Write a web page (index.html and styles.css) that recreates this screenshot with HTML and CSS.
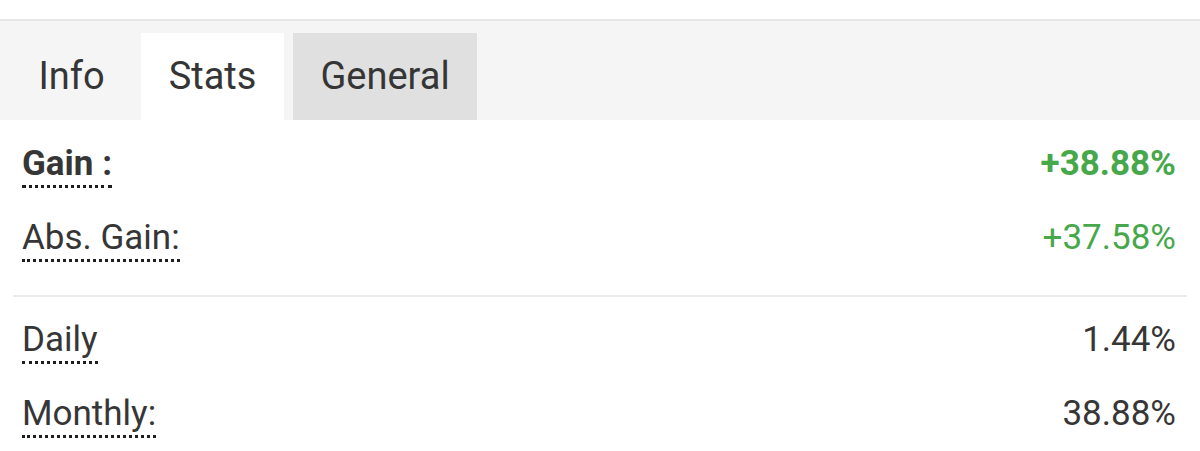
FILE: index.html
```html
<!DOCTYPE html>
<html lang="en">
<head>
<meta charset="utf-8">
<title>Stats</title>
<link rel="stylesheet" href="styles.css">
</head>
<body>
<div class="top-space"></div>
<nav class="tabbar">
  <div class="tab">Info</div>
  <div class="tab tab-active">Stats</div>
  <div class="tab tab-hover">General</div>
</nav>
<section class="stats">
  <div class="row">
    <span class="label label-bold">Gain :</span>
    <span class="value value-green value-bold">+38.88%</span>
  </div>
  <div class="row">
    <span class="label">Abs. Gain:</span>
    <span class="value value-green">+37.58%</span>
  </div>
  <hr class="divider">
  <div class="row">
    <span class="label">Daily</span>
    <span class="value">1.44%</span>
  </div>
  <div class="row">
    <span class="label">Monthly:</span>
    <span class="value">38.88%</span>
  </div>
</section>
</body>
</html>
```
FILE: styles.css
```css
html, body {
  margin: 0;
  padding: 0;
  background: #ffffff;
  overflow: hidden;
}
body {
  font-family: Roboto, "Liberation Sans", Arial, sans-serif;
  color: #363636;
}
.top-space {
  height: 19px;
  border-bottom: 2px solid #e6e6e6;
}
.tabbar {
  display: flex;
  gap: 9px;
  padding: 12px 0 0 11px;
  background: #f5f5f5;
  height: 87px;
}
.tab {
  height: 87px;
  line-height: 87px;
  padding: 0 27.5px;
  font-size: 38px;
  color: #353535;
}
.tab-active {
  background: #ffffff;
}
.tab-hover {
  background: #e0e0e0;
}
.stats {
  padding: 8px 24px 0 22px;
}
.row {
  display: flex;
  justify-content: space-between;
  align-items: baseline;
  padding: 15px 0 14px;
  font-size: 35px;
}
.label {
  display: inline-block;
  line-height: normal;
  padding-bottom: 1px;
  border-bottom: 3px dotted #1e1e1e;
}
.label-bold {
  font-weight: 700;
}
.value {
  line-height: normal;
}
.value-bold {
  font-weight: 700;
}
.value-green {
  color: #46a84a;
}
.divider {
  border: 0;
  height: 2px;
  background: #ebebeb;
  margin: 19px -11px 7px -9px;
}
```
